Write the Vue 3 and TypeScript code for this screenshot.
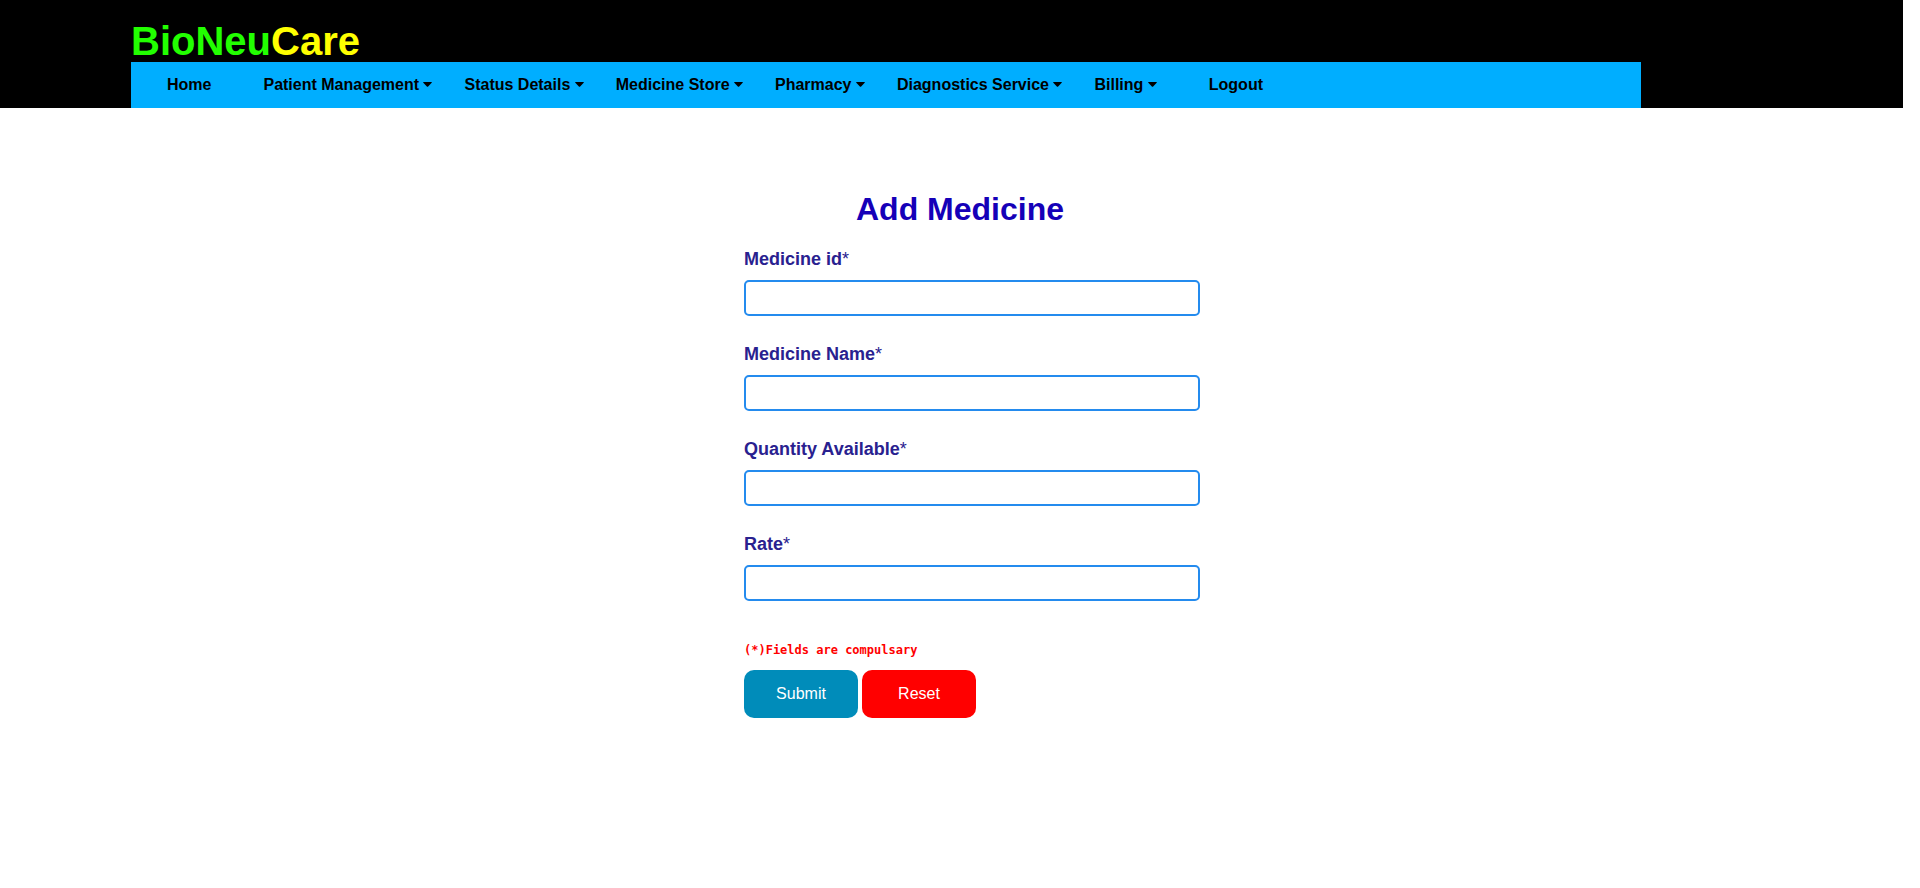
<script setup lang="ts">
import { reactive } from 'vue'

interface NavItem {
  label: string
  menu: boolean
}

interface Field {
  id: 'medicineId' | 'medicineName' | 'quantity' | 'rate'
  label: string
}

const navItems: NavItem[] = [
  { label: 'Home', menu: false },
  { label: 'Patient Management', menu: true },
  { label: 'Status Details', menu: true },
  { label: 'Medicine Store', menu: true },
  { label: 'Pharmacy', menu: true },
  { label: 'Diagnostics Service', menu: true },
  { label: 'Billing', menu: true },
  { label: 'Logout', menu: false },
]

const fields: Field[] = [
  { id: 'medicineId', label: 'Medicine id' },
  { id: 'medicineName', label: 'Medicine Name' },
  { id: 'quantity', label: 'Quantity Available' },
  { id: 'rate', label: 'Rate' },
]

const medicine = reactive({ medicineId: '', medicineName: '', quantity: '', rate: '' })

function resetForm(): void {
  for (const field of fields) medicine[field.id] = ''
}
</script>

<template>
  <div class="page">
    <header class="header">
      <div class="brand"><span class="brand-main">BioNeu</span><span class="brand-accent">Care</span></div>
      <nav class="nav">
        <template v-for="item in navItems" :key="item.label">
          <button v-if="item.menu" type="button" class="nav-menu">
            {{ item.label }}
            <svg class="caret" viewBox="0 0 9 5" aria-hidden="true">
              <path d="M0.6 0H8.4Q9.2 0.2 8.7 0.8L4.9 4.7Q4.5 5 4.1 4.7L0.3 0.8Q-0.2 0.2 0.6 0Z" />
            </svg>
          </button>
          <a v-else href="#" class="nav-link">{{ item.label }}</a>
        </template>
      </nav>
    </header>

    <main class="content">
      <h1 class="title">Add Medicine</h1>
      <form @submit.prevent @reset.prevent="resetForm">
        <div v-for="field in fields" :key="field.id" class="field">
          <label class="label" :for="field.id"><b>{{ field.label }}</b>*</label>
          <input :id="field.id" v-model="medicine[field.id]" class="input" type="text" />
        </div>
        <p class="note">(*)Fields are compulsary</p>
        <div class="actions">
          <button type="submit" class="button submit">Submit</button>
          <button type="reset" class="button reset">Reset</button>
        </div>
      </form>
    </main>
  </div>
</template>

<style>
body {
  background: #fff;
}
</style>

<style scoped>
.page {
  font-family: 'Liberation Sans', Arial, sans-serif;
}

.header {
  margin-right: 17px;
  padding: 18px 262px 0 131px;
  background: #000;
}

.brand {
  height: 44px;
  font-size: 40px;
  line-height: 46px;
  font-weight: bold;
}

.brand-main {
  color: #22ff00;
}

.brand-accent {
  color: #ffff00;
}

.nav {
  display: flex;
  background: #00aeff;
}

.nav-link,
.nav-menu {
  padding: 14px 16px;
  border: 0;
  background: transparent;
  color: #000;
  font-family: inherit;
  font-size: 16px;
  line-height: 18px;
  font-weight: bold;
  text-decoration: none;
  white-space: nowrap;
}

.nav-link {
  padding: 14px 36px;
}

.caret {
  width: 9px;
  height: 5px;
  vertical-align: 3px;
}

.content {
  width: 432px;
  margin: 0 auto;
  padding: 83px 0;
}

.title {
  margin: 0 0 21px;
  color: #1500b8;
  font-size: 32px;
  line-height: 37px;
  text-align: center;
}

.field {
  margin-bottom: 28px;
}

.label {
  display: block;
  margin-bottom: 10px;
  color: #29218f;
  font-size: 18px;
  line-height: 21px;
}

.input {
  display: block;
  box-sizing: content-box;
  width: 100%;
  height: 16px;
  padding: 8px 10px;
  border: 2px solid #248bee;
  border-radius: 5px;
  background: #fff;
  font-family: inherit;
  font-size: 14px;
}

.note {
  margin: 41px 0 12px;
  color: #ff0000;
  font-family: 'DejaVu Sans Mono', monospace;
  font-size: 12px;
  line-height: 16px;
  font-weight: bold;
}

.actions {
  display: flex;
  gap: 4px;
}

.button {
  width: 114px;
  height: 48px;
  padding: 0;
  border: 0;
  border-radius: 10px;
  color: #fff;
  font-family: inherit;
  font-size: 16px;
}

.submit {
  background: #008cba;
}

.reset {
  background: #ff0000;
}
</style>
